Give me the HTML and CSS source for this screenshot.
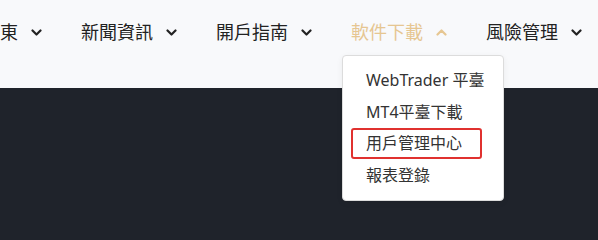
FILE: index.html
```html
<!DOCTYPE html>
<html lang="zh-Hant">
<head>
<meta charset="utf-8">
<link rel="stylesheet" href="styles.css">
</head>
<body>
<header class="header">
  <nav class="nav">
    <div class="nav-item"><span class="label">東</span><svg class="chev" viewBox="0 0 11 7"><polyline points="1.5,1.5 5.5,5.5 9.5,1.5"/></svg></div>
    <div class="nav-item"><span class="label">新聞資訊</span><svg class="chev" viewBox="0 0 11 7"><polyline points="1.5,1.5 5.5,5.5 9.5,1.5"/></svg></div>
    <div class="nav-item"><span class="label">開戶指南</span><svg class="chev" viewBox="0 0 11 7"><polyline points="1.5,1.5 5.5,5.5 9.5,1.5"/></svg></div>
    <div class="nav-item active"><span class="label">軟件下載</span><svg class="chev" viewBox="0 0 11 7"><polyline points="1.5,5.5 5.5,1.5 9.5,5.5"/></svg>
      <ul class="menu">
        <li class="menu-item">WebTrader 平臺</li>
        <li class="menu-item">MT4平臺下載</li>
        <li class="menu-item marked">用戶管理中心</li>
        <li class="menu-item">報表登錄</li>
      </ul>
    </div>
    <div class="nav-item"><span class="label">風險管理</span><svg class="chev" viewBox="0 0 11 7"><polyline points="1.5,1.5 5.5,5.5 9.5,1.5"/></svg></div>
  </nav>
</header>
<main class="dark"></main>
</body>
</html>
```
FILE: styles.css
```css
html, body {
  margin: 0;
  padding: 0;
  height: 100%;
  overflow: hidden;
  font-family: "Noto Sans", "Noto Sans CJK TC", sans-serif;
}
body {
  display: flex;
  flex-direction: column;
  background: #1f232b;
}
.header {
  height: 88px;
  background: #f8f9fb;
  flex: none;
}
.nav {
  display: flex;
  height: 64px;
  align-items: center;
  gap: 39px;
  white-space: nowrap;
}
.nav-item {
  position: relative;
  display: flex;
  align-items: center;
  gap: 13px;
  color: #222;
  font-size: 18px;
  line-height: 24px;
}
.label {
  display: block;
}
.chev {
  width: 11px;
  height: 7px;
  fill: none;
  stroke: #222;
  stroke-width: 2.2;
  stroke-linecap: round;
  stroke-linejoin: round;
  margin-top: 1px;
}
.nav-item.active {
  color: #e6c691;
}
.nav-item.active .chev {
  stroke: #e6c691;
}
.menu {
  position: absolute;
  left: -9px;
  top: 35px;
  width: 160px;
  margin: 0;
  padding: 9px 0;
  list-style: none;
  background: #fff;
  border: 1px solid #dcdcdc;
  border-radius: 4px;
  box-shadow: 0 2px 6px rgba(0,0,0,0.06);
  z-index: 2;
}
.menu-item {
  position: relative;
  height: 31.5px;
  line-height: 31.5px;
  padding-left: 23px;
  font-size: 16px;
  color: #333;
}
.menu-item.marked::after {
  content: "";
  position: absolute;
  left: 8px;
  top: 0;
  width: 127px;
  height: 27px;
  border: 2px solid #e0312f;
  border-radius: 3px;
}
.dark {
  flex: 1;
  background: #1f232b;
}
```
